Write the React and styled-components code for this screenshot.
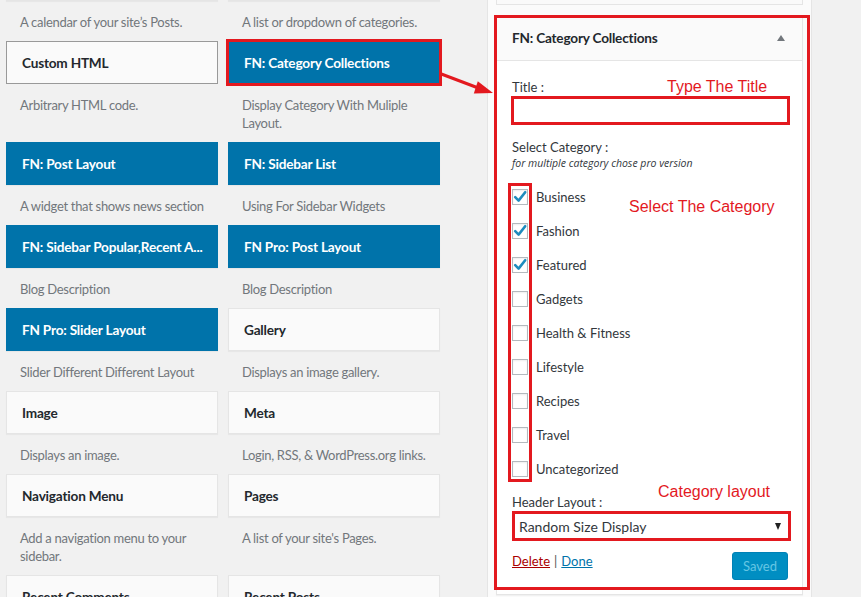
import React from "react";
import styled, { createGlobalStyle, css } from "styled-components";

const RED = "#e3191f";

const Global = createGlobalStyle`
  html, body { margin: 0; padding: 0; background: #f1f1f1; }
  body { font-family: Lato, "Open Sans", sans-serif; color: #23282d; }
  * { box-sizing: border-box; }
`;

const Page = styled.div`
  position: relative;
  width: 861px;
  height: 597px;
  overflow: hidden;
  display: flex;
  align-items: flex-start;
  padding-left: 6px;
`;

const WidgetGrid = styled.div`
  display: grid;
  grid-template-columns: 212px 212px;
  column-gap: 10px;
  margin-top: -42px;
  flex: none;
`;

const Item = styled.div`
  display: flex;
  flex-direction: column;
`;

const Card = styled.div`
  height: 43px;
  padding: 0 15px;
  display: flex;
  align-items: center;
  font-size: 13.6px;
  font-weight: 700;
  letter-spacing: -0.2px;
  white-space: nowrap;
  overflow: hidden;
  border: 1px solid #e5e5e5;
  background: #fafafa;
  color: #23282d;
  box-shadow: 0 1px 1px rgba(0, 0, 0, 0.04);
  ${(p) =>
    p.$variant === "blue" &&
    css`
      background: #0073aa;
      border-color: #0073aa;
      color: #fff;
    `}
  ${(p) =>
    p.$variant === "outlined" &&
    css`
      border-color: #999;
      box-shadow: none;
    `}
  ${(p) =>
    p.$marked &&
    css`
      outline: 3px solid ${RED};
      outline-offset: -1px;
    `}
`;

const Desc = styled.div`
  padding: 12px 6px 10px 14px;
  font-size: 13px;
  letter-spacing: -0.3px;
  line-height: 18px;
  color: #72777c;
`;

const Holder = styled.div`
  flex: none;
  width: 325px;
  margin-left: 47px;
  margin-top: -47px;
  padding: 8px 8px 40px;
  border: 1px solid #e5e5e5;
  background: #fbfbfb;
`;

const StubWidget = styled.div`
  height: 43px;
  border: 1px solid #e5e5e5;
  background: #fafafa;
`;

const Widget = styled.div`
  position: relative;
  margin-top: 10px;
  border: 1px solid #e5e5e5;
  background: #fff;
  box-shadow: 0 1px 1px rgba(0, 0, 0, 0.04);
`;

const WidgetHeader = styled.div`
  height: 45px;
  padding: 0 15px;
  display: flex;
  align-items: center;
  justify-content: space-between;
  background: #fafafa;
  border-bottom: 1px solid #e5e5e5;
  font-size: 13.6px;
  font-weight: 700;
  letter-spacing: -0.2px;
`;

const UpArrow = styled.span`
  width: 0;
  height: 0;
  margin-right: 2px;
  border-left: 4px solid transparent;
  border-right: 4px solid transparent;
  border-bottom: 6px solid #72777c;
`;

const WidgetBody = styled.div`
  padding: 17px 15px 14px;
  font-size: 13px;
`;

const FieldLabel = styled.div`
  line-height: 18px;
  color: #32373c;
  margin-top: ${(p) => p.$gap || 0}px;
`;

const Hint = styled.div`
  font-family: "Open Sans", sans-serif;
  font-size: 10.5px;
  font-style: italic;
  line-height: 14px;
  color: #32373c;
`;

const TitleInput = styled.div`
  width: 279px;
  height: 29px;
  margin-left: -1px;
  border: 3px solid ${RED};
  background: #fff;
`;

const CheckList = styled.div`
  position: relative;
  margin-top: 10px;
`;

const CheckRow = styled.div`
  height: 34px;
  display: flex;
  align-items: center;
  gap: 8px;
  color: #32373c;
`;

const Box = styled.span`
  width: 16px;
  height: 16px;
  flex: none;
  border: 1px solid #b4b9be;
  background: #fff;
  box-shadow: inset 0 1px 2px rgba(0, 0, 0, 0.07);
  display: flex;
  align-items: center;
  justify-content: center;
  overflow: visible;
`;

const Mark = styled.div`
  position: absolute;
  pointer-events: none;
  border: 3px solid ${RED};
`;

const Note = styled.div`
  position: absolute;
  font-family: "Liberation Sans", Arial, sans-serif;
  font-size: 16px;
  line-height: 18px;
  color: ${RED};
  white-space: nowrap;
`;

const SelectBox = styled.div`
  width: 279px;
  height: 30px;
  border: 3px solid ${RED};
  background: #fff;
  display: flex;
  align-items: center;
  justify-content: space-between;
  padding: 0 7px 0 4px;
  font-size: 14px;
  color: #32373c;
`;

const DownArrow = styled.span`
  width: 0;
  height: 0;
  border-left: 3.5px solid transparent;
  border-right: 3.5px solid transparent;
  border-top: 7px solid #222;
`;

const Actions = styled.div`
  margin-top: 11px;
  height: 28px;
  display: flex;
  align-items: flex-start;
  justify-content: space-between;
  font-size: 13px;
`;

const Links = styled.div`
  color: #555;
  display: flex;
  gap: 4px;
  line-height: 18px;
`;

const Link = styled.a`
  color: ${(p) => (p.$danger ? "#a00" : "#0073aa")};
  text-decoration: underline;
  cursor: pointer;
`;

const SavedButton = styled.button`
  width: 56px;
  height: 28px;
  margin-right: -1px;
  border: 1px solid #0081b6;
  border-radius: 3px;
  background: #008ec2;
  color: #66c6e4;
  font-family: inherit;
  font-size: 13px;
  padding: 0;
`;

const ArrowSvg = styled.svg`
  position: absolute;
  left: 430px;
  top: 60px;
  pointer-events: none;
`;

const rows = [
  [
    { title: "Calendar", desc: "A calendar of your site’s Posts." },
    { title: "Categories", desc: "A list or dropdown of categories." },
  ],
  [
    { title: "Custom HTML", desc: "Arbitrary HTML code.", variant: "outlined" },
    {
      title: "FN: Category Collections",
      desc: "Display Category With Muliple Layout.",
      variant: "blue",
      marked: true,
    },
  ],
  [
    { title: "FN: Post Layout", desc: "A widget that shows news section", variant: "blue" },
    { title: "FN: Sidebar List", desc: "Using For Sidebar Widgets", variant: "blue" },
  ],
  [
    { title: "FN: Sidebar Popular,Recent A...", desc: "Blog Description", variant: "blue" },
    { title: "FN Pro: Post Layout", desc: "Blog Description", variant: "blue" },
  ],
  [
    { title: "FN Pro: Slider Layout", desc: "Slider Different Different Layout", variant: "blue" },
    { title: "Gallery", desc: "Displays an image gallery." },
  ],
  [
    { title: "Image", desc: "Displays an image." },
    { title: "Meta", desc: "Login, RSS, & WordPress.org links." },
  ],
  [
    { title: "Navigation Menu", desc: "Add a navigation menu to your sidebar." },
    { title: "Pages", desc: "A list of your site's Pages." },
  ],
  [
    { title: "Recent Comments", desc: "Your site’s most recent comments." },
    { title: "Recent Posts", desc: "Your site’s most recent Posts." },
  ],
];

const categories = [
  ["Business", true],
  ["Fashion", true],
  ["Featured", true],
  ["Gadgets", false],
  ["Health & Fitness", false],
  ["Lifestyle", false],
  ["Recipes", false],
  ["Travel", false],
  ["Uncategorized", false],
];

function Check() {
  return (
    <svg width="16" height="16" viewBox="0 0 16 16" style={{ overflow: "visible" }}>
      <path d="M3.2 8.2 L6.6 11.6 L13.2 3.2" fill="none" stroke="#1e8cbe" strokeWidth="2.6" strokeLinecap="round" strokeLinejoin="round" />
    </svg>
  );
}

export default function App() {
  return (
    <>
      <Global />
      <Page>
        <WidgetGrid>
          {rows.flat().map((w) => (
            <Item key={w.title}>
              <Card $variant={w.variant} $marked={w.marked}>
                {w.title}
              </Card>
              <Desc>{w.desc}</Desc>
            </Item>
          ))}
        </WidgetGrid>

        <Holder>
          <StubWidget />
          <Widget>
            <WidgetHeader>
              <span>FN: Category Collections</span>
              <UpArrow />
            </WidgetHeader>
            <WidgetBody>
              <FieldLabel>Title :</FieldLabel>
              <TitleInput />
              <FieldLabel $gap={13}>Select Category :</FieldLabel>
              <Hint>for multiple category chose pro version</Hint>
              <CheckList>
                {categories.map(([name, on]) => (
                  <CheckRow key={name}>
                    <Box>{on && <Check />}</Box>
                    <span>{name}</span>
                  </CheckRow>
                ))}
                <Mark style={{ left: -4, top: 3, width: 24, height: 299 }} />
              </CheckList>
              <FieldLabel $gap={7}>Header Layout :</FieldLabel>
              <SelectBox>
                <span>Random Size Display</span>
                <DownArrow />
              </SelectBox>
              <Actions>
                <Links>
                  <Link $danger>Delete</Link>
                  <span>|</span>
                  <Link>Done</Link>
                </Links>
                <SavedButton disabled>Saved</SavedButton>
              </Actions>
            </WidgetBody>
            <Mark style={{ left: -3, top: -1, width: 316, height: 575 }} />
            <Note style={{ left: 170, top: 62 }}>Type The Title</Note>
            <Note style={{ left: 132, top: 182 }}>Select The Category</Note>
            <Note style={{ left: 161, top: 467 }}>Category layout</Note>
          </Widget>
        </Holder>

        <ArrowSvg width="70" height="40" viewBox="430 60 70 40">
          <line x1="440" y1="73.5" x2="477" y2="87.5" stroke={RED} strokeWidth="3" />
          <polygon points="493,93 477.8,81.2 473.8,93.4" fill={RED} />
        </ArrowSvg>
      </Page>
    </>
  );
}
